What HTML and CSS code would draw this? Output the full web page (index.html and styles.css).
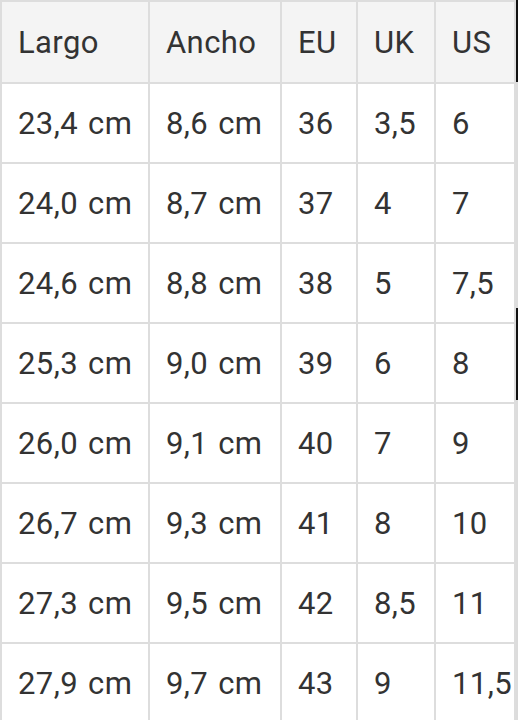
FILE: index.html
```html
<!DOCTYPE html>
<html lang="es">
<head>
<meta charset="utf-8">
<link rel="stylesheet" href="styles.css">
</head>
<body>
<div class="page">
  <div class="size-table" role="table">
    <div class="cell head">Largo</div><div class="cell head">Ancho</div><div class="cell head">EU</div><div class="cell head">UK</div><div class="cell head">US</div>
    <div class="cell">23,4 cm</div><div class="cell">8,6 cm</div><div class="cell">36</div><div class="cell">3,5</div><div class="cell">6</div>
    <div class="cell">24,0 cm</div><div class="cell">8,7 cm</div><div class="cell">37</div><div class="cell">4</div><div class="cell">7</div>
    <div class="cell">24,6 cm</div><div class="cell">8,8 cm</div><div class="cell">38</div><div class="cell">5</div><div class="cell">7,5</div>
    <div class="cell">25,3 cm</div><div class="cell">9,0 cm</div><div class="cell">39</div><div class="cell">6</div><div class="cell">8</div>
    <div class="cell">26,0 cm</div><div class="cell">9,1 cm</div><div class="cell">40</div><div class="cell">7</div><div class="cell">9</div>
    <div class="cell">26,7 cm</div><div class="cell">9,3 cm</div><div class="cell">41</div><div class="cell">8</div><div class="cell">10</div>
    <div class="cell">27,3 cm</div><div class="cell">9,5 cm</div><div class="cell">42</div><div class="cell">8,5</div><div class="cell">11</div>
    <div class="cell">27,9 cm</div><div class="cell">9,7 cm</div><div class="cell">43</div><div class="cell">9</div><div class="cell">11,5</div>
  </div>
  <div class="edge"></div>
</div>
</body>
</html>
```
FILE: styles.css
```css
html, body {
  margin: 0;
  padding: 0;
  background: #fff;
  overflow: hidden;
}
.page {
  display: flex;
  align-items: flex-start;
  height: 720px;
}
.size-table {
  display: grid;
  grid-template-columns: 146px 130px 74px 76px 78px;
  grid-template-rows: 80px;
  grid-auto-rows: 78px;
  gap: 2px;
  padding: 2px;
  background: #dddddd;
  font-family: Roboto, "Open Sans", sans-serif;
  font-size: 31px;
  letter-spacing: 0.4px;
  word-spacing: 2px;
  color: #333;
}
.cell {
  background: #fff;
  display: flex;
  align-items: center;
  padding-left: 16px;
  white-space: nowrap;
}
.cell.head {
  background: #f4f4f4;
}
.edge {
  width: 2px;
  height: 720px;
  background: linear-gradient(to bottom,
    #111 0, #111 82px,
    #dcdcdc 82px, #dcdcdc 308px,
    #111 308px, #111 400px,
    #dcdcdc 400px, #dcdcdc 720px);
}
```
